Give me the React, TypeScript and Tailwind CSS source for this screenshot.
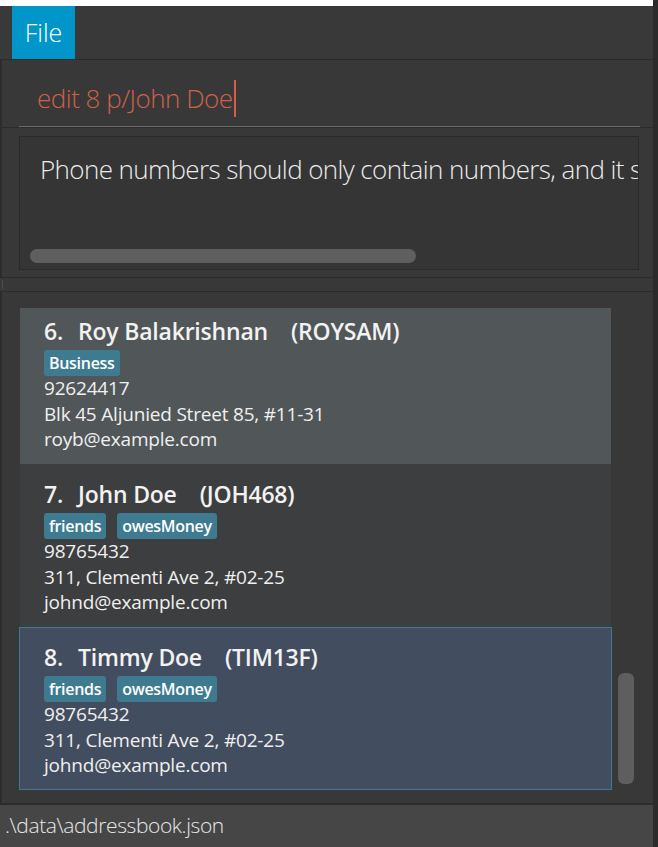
import React from 'react';

type Person = {
  index: number;
  name: string;
  code: string;
  tags: string[];
  phone: string;
  address: string;
  email: string;
};

const people: Person[] = [
  { index: 6, name: 'Roy Balakrishnan', code: 'ROYSAM', tags: ['Business'], phone: '92624417', address: 'Blk 45 Aljunied Street 85, #11-31', email: 'royb@example.com' },
  { index: 7, name: 'John Doe', code: 'JOH468', tags: ['friends', 'owesMoney'], phone: '98765432', address: '311, Clementi Ave 2, #02-25', email: 'johnd@example.com' },
  { index: 8, name: 'Timmy Doe', code: 'TIM13F', tags: ['friends', 'owesMoney'], phone: '98765432', address: '311, Clementi Ave 2, #02-25', email: 'johnd@example.com' },
];

function PersonCard({ p, variant }: { p: Person; variant: 'odd' | 'even' | 'selected' }) {
  const bg =
    variant === 'selected'
      ? 'bg-[#424d5f] border border-[#3e7b91] pt-[11px] pb-[10px] -ml-px w-[593px]'
      : variant === 'odd'
      ? 'bg-[#515658] pt-[5px] pb-[11.5px]'
      : 'bg-[#3c3e3f] pt-[12px] pb-[11.5px]';
  return (
    <div className={`${bg} pl-[24px] text-white`}>
      <div className="flex h-[36px] items-center text-[23px] font-semibold leading-[36px] tracking-[-0.2px] text-[#f2f2f2]">
        <span className="w-[34px]">{p.index}.</span>
        <span>{p.name}</span>
        <span className="ml-[23px]">({p.code})</span>
      </div>
      <div className="mt-[1px] flex h-[26px] gap-[11px]">
        {p.tags.map((t) => (
          <span key={t} className="flex items-center rounded-[3px] bg-[#3e7b91] px-[5px] text-[16px] font-semibold leading-[26px] tracking-[-0.3px] text-white">
            {t}
          </span>
        ))}
      </div>
      <div className="text-[19px] leading-[25.5px] tracking-[-0.2px] text-[#f0f0f0]">
        <div>{p.phone}</div>
        <div>{p.address}</div>
        <div>{p.email}</div>
      </div>
    </div>
  );
}

export default function App() {
  return (
    <div className="flex h-[847px] w-[658px] bg-[#2b2b2b]" style={{ fontFamily: '"Open Sans", "Noto Sans", sans-serif' }}>
      <div className="flex w-[653px] flex-col">
        {/* window top edge */}
        <div className="h-[6px] bg-white" />

        {/* menu bar */}
        <div className="flex h-[53px] bg-[#393939] pl-[12px]">
          <div className="flex w-[63px] items-center justify-center bg-[#0096c9] text-[25px] font-light text-white">File</div>
        </div>
        <div className="h-px bg-[#2c2c2c]" />

        {/* command box */}
        <div className="flex h-[67px] flex-col border-l-2 border-[#2c2c2c] bg-[#383838] pl-[17px] pr-[13px]">
          <div className="flex flex-1 items-center pl-[18px] pt-[10px]">
            <span className="text-[26px] font-light tracking-[-0.5px] text-[#d0604a]">edit 8 p/John Doe</span>
            <span className="ml-[1px] h-[37px] w-[2px] bg-[#d0604a]" />
          </div>
          <div className="h-px bg-[#6b6b6b]" />
        </div>
        <div className="h-px bg-[#2c2c2c]" />

        {/* result display */}
        <div className="flex h-[149px] flex-col border-l-2 border-[#2c2c2c] bg-[#383838] pl-[17px] pr-[14px] pt-[8px]">
          <div className="flex h-[134px] flex-col overflow-hidden border border-[#2a2a2a] bg-[#353535] pl-[20px] pr-[4px]">
            <div className="whitespace-nowrap pt-[13px] text-[26px] font-light tracking-[-0.6px] text-[#ececec]">
              Phone numbers should only contain numbers, and it should be at least 3 digits long
            </div>
            <div className="mt-auto mb-[6px] ml-[-10px] h-[14px] w-[386px] rounded-full bg-[#5f5f5f]" />
          </div>
        </div>

        {/* split pane divider */}
        <div className="h-[15px] border-y border-[#2c2c2c] bg-[#383838] pl-[2px]">
          <div className="mt-[2px] h-[9px] w-px bg-[#4d4d4d]" />
        </div>

        {/* person list */}
        <div className="flex flex-1 border-l-2 border-b-2 border-[#2c2c2c] bg-[#383838] pl-[18px] pt-[16px]">
          <div className="flex w-[591px] flex-col">
            {people.map((p, i) => (
              <PersonCard key={p.index} p={p} variant={i === 2 ? 'selected' : i === 0 ? 'odd' : 'even'} />
            ))}
          </div>
          <div className="ml-[7px] pt-[365px]">
            <div className="h-[111px] w-[16px] rounded-[6px] bg-[#5e5e5e]" />
          </div>
        </div>

        {/* status bar */}
        <div className="flex h-[42px] items-center bg-[#464646] pl-[5px]">
          <span className="text-[21px] font-light tracking-[-0.4px] text-[#e8e8e8]">.\data\addressbook.json</span>
        </div>
      </div>
      <div className="flex-1 bg-[#2b2b2b]" />
    </div>
  );
}
